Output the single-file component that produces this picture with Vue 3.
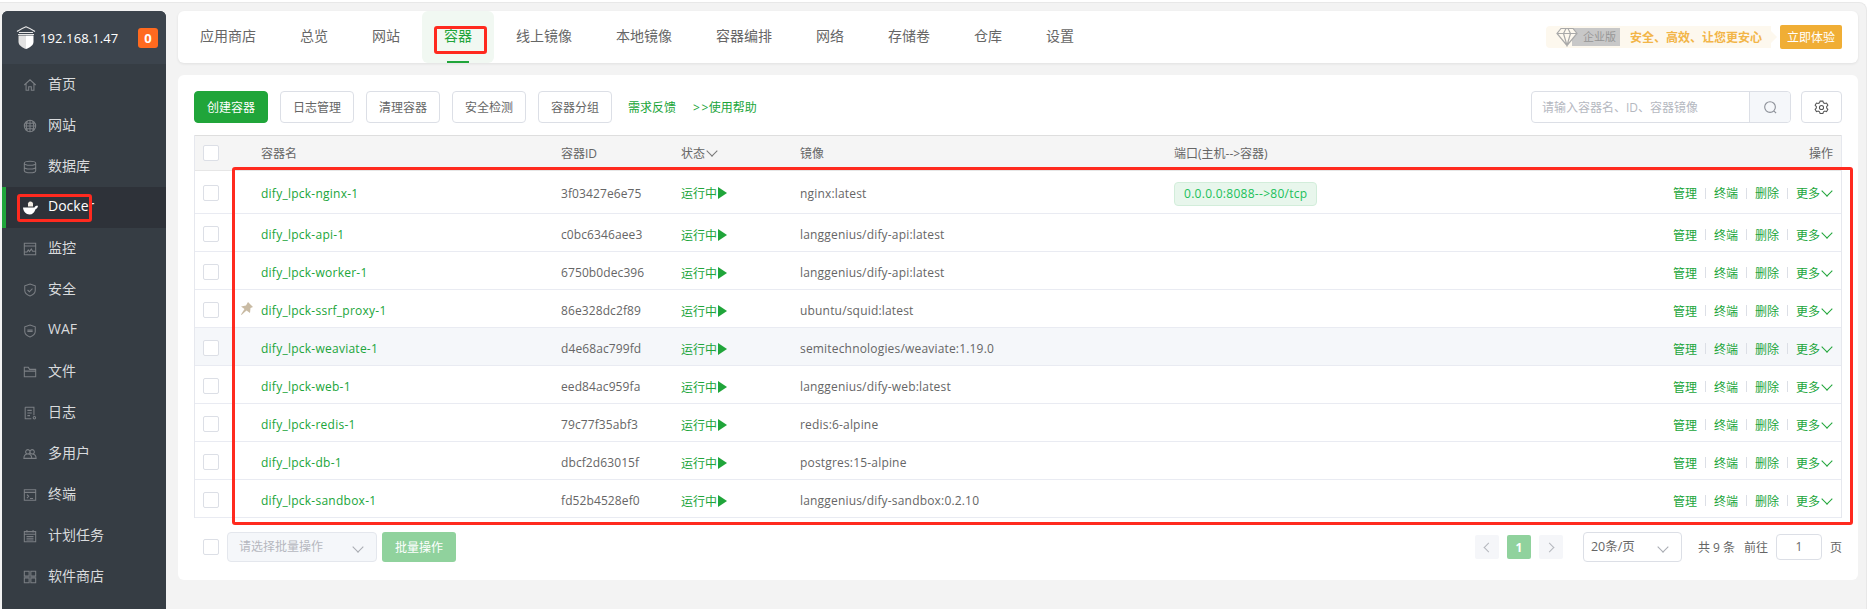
<script setup>
const menu = [
  { name: '首页', d: 'M1.5 8 8 2l6.5 6M3.5 6.500V14h3v-4h3v4h3V6.500' },
  { name: '网站', d: 'M8 1.500a6.500 6.500 0 1 0 0 13 6.500 6.500 0 0 0 0-13ZM1.500 8h13M2.500 4.800h11M2.500 11.200h11M8 1.500v13M5 2.500c-1.600 3.500-1.600 7.500 0 11M11 2.500c1.600 3.500 1.600 7.500 0 11' },
  { name: '数据库', d: 'M1.500 3.800c0-1.400 2.900-2.300 6.500-2.300s6.500.9 6.500 2.300v8.400c0 1.400-2.900 2.300-6.500 2.300s-6.500-.9-6.500-2.300ZM1.500 3.800c0 1.400 2.900 2.300 6.500 2.300s6.500-.9 6.500-2.300M1.500 8c0 1.400 2.900 2.300 6.500 2.300s6.500-.9 6.500-2.300' },
  { name: 'Docker', active: true },
  { name: '监控', d: 'M1.500 1.500h13v13h-13ZM1.500 4.500h13M1.500 11.500h3l1.500-2.500 1.500 2 2-3 1.500 2.500h3.500' },
  { name: '安全', d: 'M8 1.200 14 3.200v5.300c0 3-3 5.200-6 6.300-3-1.100-6-3.300-6-6.300V3.200ZM5.200 8l2.100 2 3.500-3.500' },
  { name: 'WAF', d: 'M8 1.200 14 3.200v5.300c0 3-3 5.200-6 6.300-3-1.100-6-3.300-6-6.300V3.200ZM5 7h6M5 8.500h6' },
  { name: '文件', d: 'M1.500 2.500h4.500l1.500 2.500h7v8.500h-13ZM1.500 7h13' },
  { name: '日志', d: 'M2.500 1.500h10v9M9.500 14.500h-7v-13M5 5h5M5 8h5M5 11h3M13 12a1.400 1.400 0 1 0 0 2.800 1.400 1.400 0 0 0 0-2.800Z' },
  { name: '多用户', d: 'M5.500 3a2.500 2.500 0 1 0 0 5 2.500 2.500 0 0 0 0-5ZM10.500 3a2.500 2.500 0 1 0 0 5 2.500 2.500 0 0 0 0-5ZM1 13c0-3 2-5 4.500-5s4.500 2 4.500 5ZM10 8c3 0 5 2 5 5h-5' },
  { name: '终端', d: 'M1.500 2h13v12h-13ZM1.500 5h13M4.500 7.500l2 2-2 2M8 12h3.500' },
  { name: '计划任务', d: 'M1.500 3h13v11.500h-13ZM4.500 1v3M11.500 1v3M1.500 6h13M4 8.500h8M4 10.500h8M4 12.500h8' },
  { name: '软件商店', d: 'M1.500 1.500h5.500v5.500h-5.500ZM9 1.500h5.500v5.500H9ZM1.500 9h5.500v5.500h-5.500ZM9 9h5.500v5.500H9Z' }
]

const tabs = ['应用商店', '总览', '网站', '容器', '线上镜像', '本地镜像', '容器编排', '网络', '存储卷', '仓库', '设置']
const tools = ['日志管理', '清理容器', '安全检测', '容器分组']

const rows = [
  { name: 'dify_lpck-nginx-1', id: '3f03427e6e75', image: 'nginx:latest', port: '0.0.0.0:8088-->80/tcp' },
  { name: 'dify_lpck-api-1', id: 'c0bc6346aee3', image: 'langgenius/dify-api:latest' },
  { name: 'dify_lpck-worker-1', id: '6750b0dec396', image: 'langgenius/dify-api:latest' },
  { name: 'dify_lpck-ssrf_proxy-1', id: '86e328dc2f89', image: 'ubuntu/squid:latest', pin: true },
  { name: 'dify_lpck-weaviate-1', id: 'd4e68ac799fd', image: 'semitechnologies/weaviate:1.19.0', hover: true },
  { name: 'dify_lpck-web-1', id: 'eed84ac959fa', image: 'langgenius/dify-web:latest' },
  { name: 'dify_lpck-redis-1', id: '79c77f35abf3', image: 'redis:6-alpine' },
  { name: 'dify_lpck-db-1', id: 'dbcf2d63015f', image: 'postgres:15-alpine' },
  { name: 'dify_lpck-sandbox-1', id: 'fd52b4528ef0', image: 'langgenius/dify-sandbox:0.2.10' }
]
</script>

<template>
  <div class="frame">
    <aside class="sidebar">
      <div class="brand">
        <svg class="logo" width="20" height="23" viewBox="0 0 20 23">
          <path d="M1 5.500C4 3.500 7 2 10 .8c3 1.200 6 2.700 9 4.700M3 6.500h14M2 8.500h16" fill="none" stroke="#e6e6e6" stroke-width="1.200" />
          <path d="M10 9.500h7.500v6.500c0 3-3.500 5.500-7.500 7Z" fill="#fff" />
          <path d="M10 9.500H2.500v6.500c0 3 3.500 5.500 7.500 7Z" fill="#e2e2e2" />
        </svg>
        <span class="ip">192.168.1.47</span>
        <span class="badge">0</span>
      </div>
      <div v-for="item in menu" :key="item.name" class="menu-item" :class="{ active: item.active }">
        <svg v-if="item.active" class="menu-icon" width="15" height="14" viewBox="0 0 15 14">
          <path d="M0 6.500h11.500c.4-1.300 1.500-2 3.500-1.700-.2 2-1.200 3-2.500 3.400-.8 3-3 5.300-6 5.300C3 13.500.3 10.500 0 6.500Z" fill="#fff" />
          <path d="M5 5.500V2.500C5.500 1 6.500.5 7.500.5s2.300.8 2.500 2v3Z" fill="#f3ede4" />
        </svg>
        <svg v-else class="menu-icon" width="14" height="14" viewBox="0 0 16 16">
          <path :d="item.d" fill="none" stroke="#7b7f84" stroke-width="1.200" />
        </svg>
        <span>{{ item.name }}</span>
        <i v-if="item.active" class="mark mark-docker"></i>
      </div>
    </aside>

    <main class="main">
      <nav class="topbar">
        <div v-for="tab in tabs" :key="tab" class="tab" :class="{ on: tab === '容器' }">
          {{ tab }}
          <i v-if="tab === '容器'" class="mark mark-tab"></i>
        </div>
        <div class="promo">
          <div class="promo-tag">
            <svg class="gem" width="22" height="20" viewBox="0 0 22 20">
              <path d="M5 1.500h12l4 5-10 12-10-12ZM1 6.500h20M7.500 6.500 11 18.500l3.500-12L12 1.500h-2Z" fill="#fdf8ee" stroke="#a9a9a9" stroke-width="1.200" />
            </svg>
            <span class="tag-text">企业版</span>
            <span class="promo-text">安全、高效、让您更安心</span>
          </div>
          <button class="try">立即体验</button>
        </div>
      </nav>

      <section class="card">
        <div class="toolbar">
          <button class="btn primary">创建容器</button>
          <button v-for="tool in tools" :key="tool" class="btn">{{ tool }}</button>
          <span class="link first-link">需求反馈</span>
          <span class="link help-link"><span class="gt">&gt;&gt;</span>使用帮助</span>
          <div class="search">
            <span class="search-text">请输入容器名、ID、容器镜像</span>
            <span class="search-btn">
              <svg width="15" height="15" viewBox="0 0 16 16">
                <path d="M7.500 1.800a5.700 5.700 0 1 0 0 11.400 5.700 5.700 0 0 0 0-11.400ZM11.500 11.500 14 14" fill="none" stroke="#8d9199" stroke-width="1.200" />
              </svg>
            </span>
          </div>
          <button class="gear">
            <svg width="15" height="15" viewBox="0 0 16 16">
              <path d="M6.500 1.200h3l.6 1.800 1.500.8 1.800-.6 1.400 2.400-1.300 1.400v1.600l1.300 1.400-1.400 2.400-1.800-.6-1.500.8-.6 1.800h-3l-.6-1.800-1.500-.8-1.800.6L1.200 10l1.300-1.400V7L1.200 5.600l1.400-2.400 1.800.6 1.500-.8ZM8 5.800a2.200 2.200 0 1 0 0 4.400 2.200 2.200 0 0 0 0-4.400Z" fill="none" stroke="#555" stroke-width="1.100" />
            </svg>
          </button>
        </div>

        <div class="table">
          <div class="row head">
            <span class="cell-check"><i class="check"></i></span>
            <span>容器名</span>
            <span>容器ID</span>
            <span class="status-head">状态<i class="chev"></i></span>
            <span>镜像</span>
            <span>端口(主机--&gt;容器)</span>
            <span class="ops-head">操作</span>
          </div>
          <div v-for="(row, i) in rows" :key="row.id" class="row" :class="{ tall: i === 0, hover: row.hover }">
            <span class="cell-check"><i class="check"></i></span>
            <span class="name">
              <svg v-if="row.pin" class="pin" width="13" height="13" viewBox="0 0 13 13">
                <path d="M8 0 13 5 10.500 6 10 11 6.500 8.500 1.500 13 1 12.500 4.500 7 1 4.500 6 3.500Z" fill="#c9bba4" />
              </svg>
              {{ row.name }}
            </span>
            <span class="mono">{{ row.id }}</span>
            <span class="status">运行中<i class="play"></i></span>
            <span class="wide">{{ row.image }}</span>
            <span><em v-if="row.port" class="port">{{ row.port }}</em></span>
            <span class="ops">
              <b>管理</b><u></u><b>终端</b><u></u><b>删除</b><u></u><b>更多</b><i class="chev green"></i>
            </span>
          </div>
          <i class="mark mark-table"></i>
        </div>

        <div class="footer">
          <i class="check foot-check"></i>
          <div class="batch-select">请选择批量操作<i class="chev gray"></i></div>
          <button class="batch-btn">批量操作</button>
          <div class="pager">
            <span class="page"><i class="arrow left"></i></span>
            <span class="page current">1</span>
            <span class="page"><i class="arrow right"></i></span>
            <div class="size-select">20条/页<i class="chev gray"></i></div>
            <span class="total">共 9 条</span>
            <span class="goto">前往</span>
            <span class="page-input">1</span>
            <span class="unit">页</span>
          </div>
        </div>
      </section>
    </main>
  </div>
</template>

<style scoped>
.frame {
  display: flex;
  gap: 12px;
  box-sizing: border-box;
  width: 1867px;
  height: 607px;
  margin-top: 2px;
  padding: 8px 8px 0 2px;
  overflow: hidden;
  background: #f3f3f3;
  border-top: 1px solid #e8e8e8;
  border-right: 1px solid #e8e8e8;
  border-top-right-radius: 8px;
  font-family: "Open Sans", "Noto Sans CJK SC", sans-serif;
  font-size: 12px;
  color: #666;
}

.sidebar {
  flex: none;
  width: 164px;
  height: 598px;
  background: #363d44;
  border-radius: 6px 6px 0 0;
  color: #d9dbdd;
  font-size: 14px;
}

.brand {
  display: flex;
  align-items: center;
  height: 53px;
  padding: 0 8px 0 14px;
  background: #3c444d;
  border-radius: 6px 6px 0 0;
  color: #fff;
}

.ip {
  margin-left: 4px;
  font-size: 13px;
  letter-spacing: 0.1px;
}

.badge {
  margin-left: auto;
  width: 20px;
  height: 20px;
  line-height: 20px;
  text-align: center;
  border-radius: 3px;
  background: #ff6a1f;
  font-size: 13px;
  font-weight: 700;
}

.menu-item {
  position: relative;
  display: flex;
  align-items: center;
  gap: 11px;
  height: 41px;
  padding-left: 21px;
}

.menu-item > span {
  position: relative;
  top: -2px;
}

.menu-item.active {
  gap: 10px;
  background: #2e3239;
  color: #fff;
  box-shadow: inset 4px 0 0 #20a53a;
}

.menu-icon {
  flex: none;
}

.mark {
  position: absolute;
  box-sizing: border-box;
  border: 3px solid #ff2a1f;
  border-radius: 3px;
}

.mark-docker {
  left: 15px;
  top: 7px;
  width: 75px;
  height: 28px;
}

.mark-tab {
  left: 12px;
  top: 15px;
  width: 53px;
  height: 28px;
}

.mark-table {
  left: 37px;
  top: 32px;
  width: 1621px;
  height: 358px;
}

.main {
  flex: none;
  width: 1680px;
}

.topbar {
  display: flex;
  align-items: center;
  height: 52px;
  background: #fff;
  border-radius: 6px;
  box-shadow: 0 1px 3px rgba(0, 0, 0, 0.08);
  font-size: 14px;
}

.tab {
  position: relative;
  height: 52px;
  line-height: 50px;
  padding: 0 22px;
  color: #666;
}

.tab.on {
  color: #20a53a;
  background: #f1f8f2;
  border-radius: 6px;
}

.tab.on::after {
  content: "";
  position: absolute;
  left: 25px;
  bottom: 0;
  width: 22px;
  height: 2px;
  background: #20a53a;
}

.promo {
  display: flex;
  align-items: center;
  margin-left: auto;
  padding-right: 16px;
}

.promo-tag {
  position: relative;
  display: flex;
  align-items: center;
  box-sizing: border-box;
  width: 225px;
  height: 22px;
  padding-left: 10px;
  background: #fdf8ee;
  border-radius: 4px 0 0 4px;
}

.promo-tag::after {
  content: "";
  position: absolute;
  left: 225px;
  top: 5px;
  border-left: 6px solid #fdf8ee;
  border-top: 6px solid transparent;
  border-bottom: 6px solid transparent;
}

.gem {
  position: relative;
  flex: none;
  z-index: 1;
}

.tag-text {
  flex: none;
  box-sizing: border-box;
  margin-left: -6px;
  width: 48px;
  height: 18px;
  line-height: 17px;
  padding-left: 11px;
  background: #c8c8c8;
  color: #969696;
  font-size: 11px;
}

.promo-text {
  margin-left: 10px;
  color: #f2b548;
  font-size: 12px;
  font-weight: 700;
  white-space: nowrap;
}

.try {
  width: 62px;
  height: 24px;
  margin-left: 9px;
  padding: 0;
  border: 0;
  border-radius: 2px;
  background: #f0ae35;
  color: #fff;
  font: inherit;
  font-size: 12px;
}

.card {
  height: 505px;
  margin-top: 12px;
  padding: 16px 16px 0;
  box-sizing: border-box;
  background: #fff;
  border-radius: 6px;
}

.toolbar {
  display: flex;
  align-items: center;
  gap: 12px;
  height: 32px;
}

.btn {
  width: 74px;
  height: 32px;
  padding: 0;
  border: 1px solid #dcdfe6;
  border-radius: 4px;
  background: #fff;
  color: #666;
  font: inherit;
}

.btn.primary {
  background: #20a53a;
  border-color: #20a53a;
  color: #fff;
}

.link {
  color: #20a53a;
}

.first-link {
  margin-left: 4px;
}

.help-link {
  margin-left: 5px;
}

.gt {
  letter-spacing: 1.5px;
  margin-right: -1px;
}

.search {
  display: flex;
  align-items: center;
  box-sizing: border-box;
  width: 260px;
  height: 32px;
  margin-left: auto;
  border: 1px solid #dcdfe6;
  border-radius: 4px;
  color: #b5b8bf;
}

.search-text {
  flex: 1;
  padding-left: 10px;
}

.search-btn {
  display: flex;
  align-items: center;
  justify-content: center;
  width: 40px;
  height: 30px;
  background: #f5f7fa;
  border-left: 1px solid #dcdfe6;
  border-radius: 0 4px 4px 0;
}

.gear {
  display: flex;
  align-items: center;
  justify-content: center;
  box-sizing: border-box;
  width: 41px;
  height: 32px;
  margin-left: -2px;
  padding: 0;
  border: 1px solid #dcdfe6;
  border-radius: 4px;
  background: #fff;
}

.table {
  position: relative;
  margin-top: 12px;
  border-left: 1px solid #e6e8ee;
  border-right: 1px solid #e6e8ee;
}

.row {
  display: grid;
  grid-template-columns: 66px 300px 120px 119px 374px 1fr 200px;
  align-items: center;
  height: 38px;
  padding-top: 2px;
  box-sizing: border-box;
  border-bottom: 1px solid #e9ebf2;
  white-space: nowrap;
}

.row:not(.head):not(.tall) > span:not(.cell-check) {
  position: relative;
  top: 1px;
}

.row.tall {
  height: 43px;
}

.row.hover {
  background: #f5f7fa;
}

.row.head {
  height: 36px;
  padding-top: 0;
  background: #f5f5f5;
  border-top: 1px solid #dedede;
  border-bottom: 1px solid #e6e6e6;
}

.cell-check {
  padding-left: 8px;
  display: flex;
}

.check {
  display: block;
  box-sizing: border-box;
  width: 16px;
  height: 16px;
  background: #fff;
  border: 1px solid #dcdfe6;
  border-radius: 2px;
}

.name {
  position: relative;
  color: #20a53a;
  letter-spacing: 0.25px;
}

.mono {
  letter-spacing: 0.1px;
}

.wide {
  letter-spacing: 0.18px;
}

.pin {
  position: absolute;
  left: -21px;
  top: 0;
}

.status,
.status-head {
  display: flex;
  align-items: center;
}

.status {
  color: #20a53a;
}

.play {
  width: 0;
  height: 0;
  margin-left: 1px;
  border-left: 9px solid #20a53a;
  border-top: 6px solid transparent;
  border-bottom: 6px solid transparent;
}

.chev {
  display: inline-block;
  width: 7px;
  height: 7px;
  margin: -4px 0 0 3px;
  border-right: 1px solid #777;
  border-bottom: 1px solid #777;
  transform: rotate(45deg);
}

.chev.green {
  border-color: #20a53a;
}

.chev.gray {
  position: absolute;
  right: 14px;
  top: 10px;
  margin: 0;
  border-color: #a8abb2;
}

.port {
  display: inline-block;
  height: 22px;
  line-height: 22px;
  margin-top: 2px;
  padding: 0 9px;
  border: 1px solid #d2edda;
  border-radius: 4px;
  background: #e8f6ec;
  color: #20c05a;
  font-style: normal;
  letter-spacing: 0.28px;
}

.ops-head {
  text-align: right;
  padding-right: 8px;
}

.ops {
  display: flex;
  align-items: center;
  justify-content: flex-end;
  padding-right: 10px;
  color: #20a53a;
}

.ops b {
  font-weight: 400;
}

.ops u {
  width: 1px;
  height: 11px;
  margin: 0 8px;
  background: #dcdfe6;
}

.footer {
  display: flex;
  align-items: center;
  height: 30px;
  margin-top: 14px;
  padding-left: 9px;
}

.foot-check {
  flex: none;
}

.batch-select {
  position: relative;
  box-sizing: border-box;
  width: 150px;
  height: 30px;
  line-height: 28px;
  margin-left: 8px;
  padding-left: 11px;
  background: #f5f7fa;
  border: 1px solid #e4e7ed;
  border-radius: 4px;
  color: #b5b8bf;
}

.batch-btn {
  width: 74px;
  height: 30px;
  margin-left: 5px;
  padding: 0;
  border: 0;
  border-radius: 3px;
  background: #90d29d;
  color: #fff;
  font: inherit;
}

.pager {
  display: flex;
  align-items: center;
  margin-left: auto;
}

.page {
  display: flex;
  align-items: center;
  justify-content: center;
  width: 24px;
  height: 24px;
  margin-right: 8px;
  border-radius: 2px;
  background: #f5f6f9;
}

.page.current {
  background: #90d29d;
  color: #fff;
  font-weight: 700;
}

.arrow {
  width: 6px;
  height: 6px;
  border-left: 1px solid #b4b7bd;
  border-bottom: 1px solid #b4b7bd;
}

.arrow.left {
  transform: rotate(45deg);
  margin-left: 3px;
}

.arrow.right {
  transform: rotate(225deg);
  margin-right: 3px;
}

.size-select {
  position: relative;
  box-sizing: border-box;
  width: 99px;
  height: 30px;
  line-height: 28px;
  margin-left: 12px;
  padding-left: 7px;
  border: 1px solid #dcdfe6;
  border-radius: 4px;
  font-size: 12.5px;
}

.total {
  margin-left: 16px;
  width: 38px;
}

.goto {
  margin-left: 8px;
}

.page-input {
  box-sizing: border-box;
  width: 46px;
  height: 26px;
  line-height: 24px;
  margin-left: 8px;
  text-align: center;
  border: 1px solid #dcdfe6;
  border-radius: 4px;
}

.unit {
  margin-left: 8px;
}
</style>

<style>
body {
  background: #fff;
  overflow: hidden;
}
</style>
